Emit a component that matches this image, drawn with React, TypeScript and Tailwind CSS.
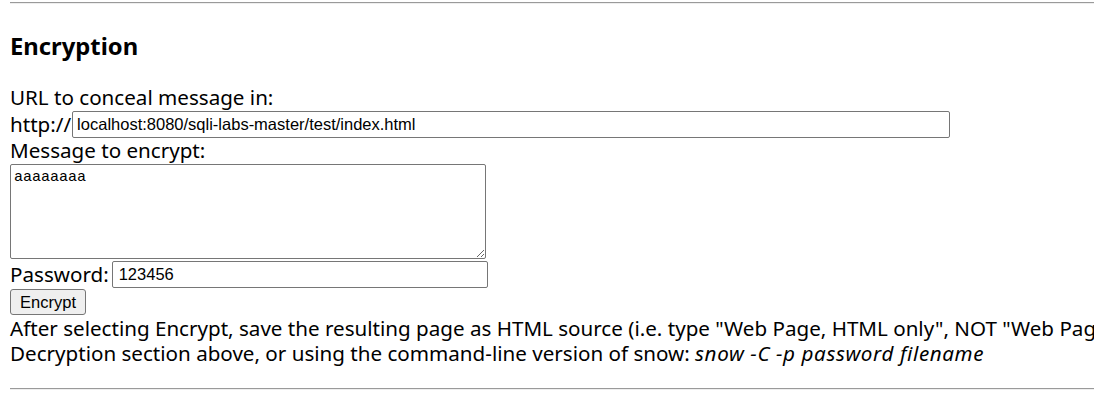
import React from "react";

export default function App() {
  return (
    <div className="w-[1094px] h-[395px] overflow-hidden bg-white text-black">
      <div className="w-[1300px] px-[10px] text-[20.6px] leading-[25px]" style={{ fontFamily: '"Noto Sans", "Open Sans", sans-serif' }}>
        <div className="mt-[2px] w-[1084px] border-t border-t-[#9a9a9a] border-b border-b-[#eeeeee]" />
        <h3 className="mt-[27px] text-[23.8px] leading-[30px] font-bold">Encryption</h3>
        <div className="mt-[24px] h-[25px]">URL to conceal message in:</div>
        <div className="flex items-center h-[28px]">
          <span>http://</span>
          <input
            defaultValue="localhost:8080/sqli-labs-master/test/index.html"
            className="ml-[1px] w-[878px] h-[27px] border border-[#767676] rounded-[2px] px-[4px] text-[16.5px] outline-none"
            style={{ fontFamily: '"Liberation Sans", Arial, sans-serif' }}
          />
        </div>
        <div className="h-[25px]">Message to encrypt:</div>
        <textarea
          defaultValue="aaaaaaaa"
          className="block mt-[1px] w-[476px] h-[95px] border border-[#767676] rounded-[2px] px-[3px] py-[4px] text-[15px] leading-[18px] resize outline-none"
          style={{ fontFamily: '"Liberation Mono", "Courier New", monospace' }}
        />
        <div className="flex items-center h-[30px]">
          <span>Password:</span>
          <input
            type="text"
            defaultValue="123456"
            className="ml-[3px] w-[376px] h-[27px] border border-[#767676] rounded-[2px] px-[6px] text-[16.5px] outline-none"
            style={{ fontFamily: '"Liberation Sans", Arial, sans-serif' }}
          />
        </div>
        <button
          className="block w-[76px] h-[26px] bg-[#efefef] border border-[#767676] rounded-[3px] text-[16.5px] leading-[20px]"
          style={{ fontFamily: '"Liberation Sans", Arial, sans-serif' }}
        >
          Encrypt
        </button>
        <div className="mt-[1px] whitespace-nowrap h-[25px]">
          After selecting Encrypt, save the resulting page as HTML source (i.e. type "Web Page, HTML only", NOT "Web Page, complete")
        </div>
        <div className="whitespace-nowrap h-[25px]">
          Decryption section above, or using the command-line version of snow: <i className="tracking-[0.6px]">snow -C -p password filename</i>
        </div>
        <div className="mt-[22px] w-[1084px] border-t border-t-[#9a9a9a] border-b border-b-[#eeeeee]" />
      </div>
    </div>
  );
}
